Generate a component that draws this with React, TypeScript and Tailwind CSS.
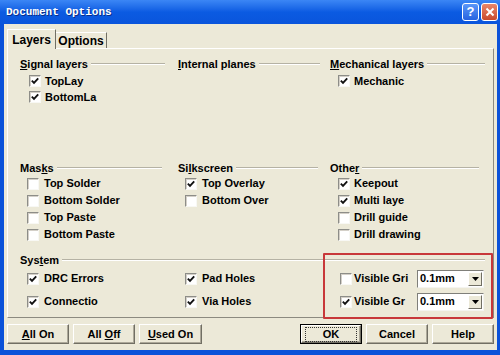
import type { ReactNode } from "react"

function Check({ on }: { on?: boolean }) {
  return (
    <span className="w-[12px] h-[12px] shrink-0 bg-white border border-t-[#8d8d88] border-l-[#8d8d88] border-r-[#f8f8f4] border-b-[#f8f8f4] shadow-[inset_1px_1px_0_#d4d0c8] flex items-center justify-center">
      {on && (
        <svg width="10" height="10" viewBox="0 0 10 10">
          <polyline points="1.8,4.6 4,6.8 8.2,2.4" fill="none" stroke="#111" strokeWidth="1.9" />
        </svg>
      )}
    </span>
  )
}

function Item({ on, label, gap = "gap-[5px]", h = "h-[16px]" }: { on?: boolean; label: string; gap?: string; h?: string }) {
  return (
    <div className={`flex items-center ${gap} ${h}`}>
      <Check on={on} />
      <span className="whitespace-nowrap">{label}</span>
    </div>
  )
}

function Header({ children, end }: { children: ReactNode; end: string }) {
  return (
    <div className={`flex items-center h-[14px] ${end}`}>
      <span className="whitespace-nowrap leading-[14px]">{children}</span>
      <span className="flex-1 ml-[3px] h-[2px] border-t border-t-[#b5b2a4] border-b border-b-white -mt-[1px]" />
    </div>
  )
}

function Btn({ children, w, def }: { children: ReactNode; w: string; def?: boolean }) {
  return (
    <div className={`${w} h-[20px] ${def ? "border border-black" : ""}`}>
      <div className="w-full h-full bg-[#ece9d8] border border-t-white border-l-white border-r-[#716f64] border-b-[#716f64] shadow-[inset_-1px_-1px_0_#aca899] flex items-center justify-center">
        {def ? (
          <span className="border border-dotted border-[#333] px-[17px] leading-[13px]">{children}</span>
        ) : (
          <span>{children}</span>
        )}
      </div>
    </div>
  )
}

function Select() {
  return (
    <div className="w-[67px] h-[18px] bg-white border border-t-[#7f7f7a] border-l-[#7f7f7a] border-r-[#f4f4f0] border-b-[#f4f4f0] flex items-center">
      <span className="flex-1 pl-[2px]">0.1mm</span>
      <span className="w-[14px] h-[14px] mr-[1px] bg-[#ece9d8] border border-t-white border-l-white border-r-[#716f64] border-b-[#716f64] flex items-center justify-center">
        <svg width="7" height="4" viewBox="0 0 7 4"><polygon points="0,0 7,0 3.5,4" fill="#000" /></svg>
      </span>
    </div>
  )
}

export default function App() {
  return (
    <div className="relative w-[500px] h-[355px] bg-[#0b52d9] flex flex-col text-[11px] font-bold text-black font-['Liberation_Sans',Arial,sans-serif]">
      <div className="h-[24px] flex items-center justify-between pl-[6px] pr-[2px] bg-gradient-to-b from-[#3b86f5] via-[#0b5be2] to-[#0a55dc]">
        <span className="text-white font-['Liberation_Mono',monospace] text-[11px] [text-shadow:1px_1px_0_#0a2f8a]">Document Options</span>
        <div className="flex gap-[2px]">
          <div className="w-[17px] h-[18px] rounded-[3px] border border-white bg-gradient-to-b from-[#5b96f8] to-[#2763e0] text-white text-[13px] leading-[16px] text-center">?</div>
          <div className="w-[17px] h-[18px] rounded-[3px] border border-white bg-gradient-to-b from-[#e9866a] to-[#c94a2c] flex items-center justify-center">
            <svg width="10" height="10" viewBox="0 0 10 10"><path d="M1.5 1.5 L8.5 8.5 M8.5 1.5 L1.5 8.5" stroke="#fff" strokeWidth="2" /></svg>
          </div>
        </div>
      </div>

      <div className="flex-1 bg-[#ece9d8] ml-[4px] mr-[3px] mb-[5px] pt-[5px] px-[3px] flex flex-col">
        <div className="flex items-end h-[19px]">
          <div className="w-[49px] h-[20px] -mb-[1px] z-10 bg-[#ece9d8] border-t border-l border-white border-r border-r-[#716f64] flex items-center justify-center text-[12px]">Layers</div>
          <div className="w-[51px] h-[16px] border-t border-t-white border-r border-r-[#716f64] flex items-center justify-center text-[12px]">Options</div>
        </div>

        <div className="h-[270px] border border-t-white border-l-white border-r-[#8c8a80] border-b-[#8c8a80] pl-[12px] pt-[8px] flex flex-col">
          <div className="grid grid-cols-[158px_152px_1fr] h-[104px]">
            <div>
              <Header end="mr-[13px]"><u>S</u>ignal layers</Header>
              <div className="mt-[2px] pl-[9px]">
                <Item on label="TopLay" gap="gap-[4px]" />
                <Item on label="BottomLa" gap="gap-[4px]" />
              </div>
            </div>
            <div>
              <Header end="mr-[10px]"><u>I</u>nternal planes</Header>
            </div>
            <div>
              <Header end="mr-[8px]"><u>M</u>echanical layers</Header>
              <div className="mt-[2px] pl-[8px]">
                <Item on label="Mechanic" gap="gap-[4px]" />
              </div>
            </div>
          </div>

          <div className="grid grid-cols-[158px_152px_1fr] h-[92px]">
            <div>
              <Header end="mr-[16px]">Mas<u>k</u>s</Header>
              <div className="pl-[7px]">
                <Item label="Top Solder" h="h-[17px]" />
                <Item label="Bottom Solder" h="h-[17px]" />
                <Item label="Top Paste" h="h-[17px]" />
                <Item label="Bottom Paste" h="h-[17px]" />
              </div>
            </div>
            <div>
              <Header end="mr-[12px]">Si<u>l</u>kscreen</Header>
              <div className="pl-[7px]">
                <Item on label="Top Overlay" h="h-[17px]" />
                <Item label="Bottom Over" h="h-[17px]" />
              </div>
            </div>
            <div>
              <Header end="mr-[14px]">Othe<u>r</u></Header>
              <div className="pl-[8px]">
                <Item on label="Keepout" h="h-[17px]" gap="gap-[4px]" />
                <Item on label="Multi laye" h="h-[17px]" gap="gap-[4px]" />
                <Item label="Drill guide" h="h-[17px]" gap="gap-[4px]" />
                <Item label="Drill drawing" h="h-[17px]" gap="gap-[4px]" />
              </div>
            </div>
          </div>

          <Header end="mr-[8px]">Sys<u>t</u>em</Header>
          <div className="grid grid-cols-[158px_152px_1fr]">
            <div className="pl-[7px]">
              <Item on label="DRC Errors" h="h-[23px]" />
              <Item on label="Connectio" h="h-[23px]" />
            </div>
            <div className="pl-[7px]">
              <Item on label="Pad Holes" h="h-[23px]" />
              <Item on label="Via Holes" h="h-[23px]" />
            </div>
            <div className="pl-[10px]">
              <div className="flex items-center h-[23px]">
                <div className="w-[77px]"><Item label="Visible Gri" gap="gap-[2px]" /></div>
                <Select />
              </div>
              <div className="flex items-center h-[23px]">
                <div className="w-[77px]"><Item on label="Visible Gr" gap="gap-[2px]" /></div>
                <Select />
              </div>
            </div>
          </div>
        </div>

        <div className="flex mt-[6px] gap-[4px]">
          <Btn w="w-[62px]"><u>A</u>ll On</Btn>
          <Btn w="w-[62px]">All <u>O</u>ff</Btn>
          <Btn w="w-[63px]"><u>U</u>sed On</Btn>
          <div className="ml-auto flex gap-[4px]">
            <Btn w="w-[62px]" def>OK</Btn>
            <Btn w="w-[62px]">Cancel</Btn>
            <Btn w="w-[62px]">Help</Btn>
          </div>
        </div>
      </div>

      <div className="absolute left-[323px] top-[253px] w-[170px] h-[66px] border-2 border-[#c8383a] rounded-[1px]" />
    </div>
  )
}
